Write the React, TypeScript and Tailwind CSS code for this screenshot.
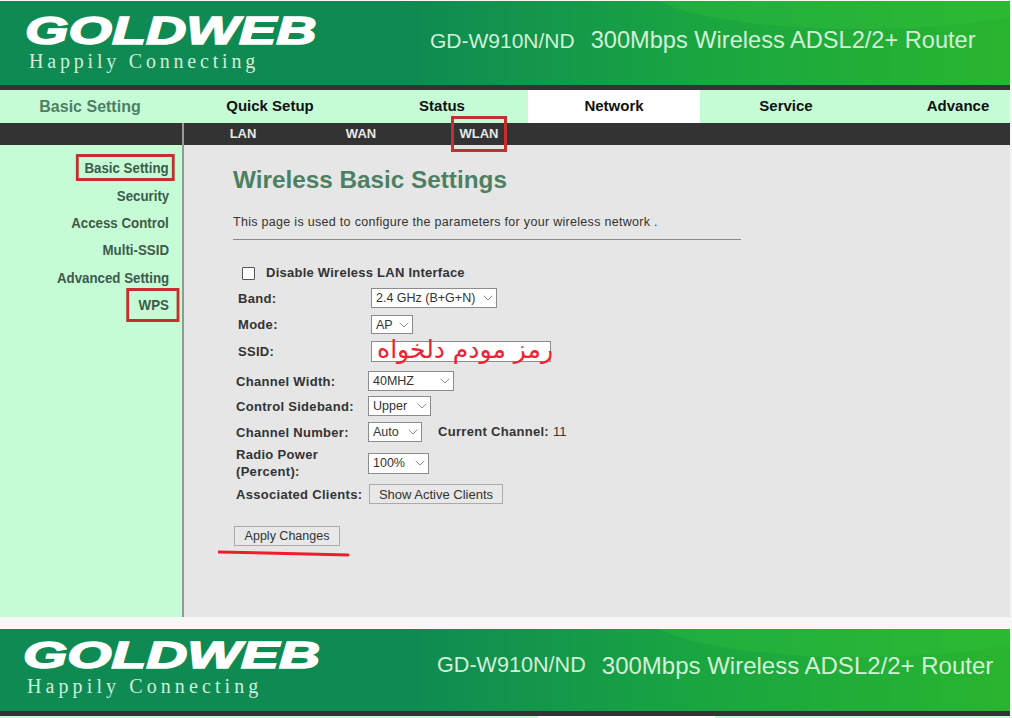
import React from 'react';
import { ChevronDown } from 'lucide-react';

const NAV_ITEMS = ['Quick Setup', 'Status', 'Network', 'Service', 'Advance'];
const SUB_ITEMS = ['LAN', 'WAN', 'WLAN'];
const SIDE_ITEMS = ['Basic Setting', 'Security', 'Access Control', 'Multi-SSID', 'Advanced Setting', 'WPS'];

const Banner: React.FC<{ second?: boolean }> = ({ second }) => (
  <div className={`relative flex overflow-hidden bg-gradient-to-r from-[#0f8a52] from-40% via-[#1aa63f] via-70% to-[#29b52e] ${second ? 'h-[82px]' : 'h-[84px] mt-px'}`}>
    <div className="absolute -top-[52px] -right-[60px] w-[420px] h-[80px] rounded-[50%] bg-[#35c23a] opacity-30" />
    <div className={`relative flex flex-col shrink-0 ${second ? 'w-[437px] pl-[23px] pt-[9px]' : 'w-[430px] pl-[25px] pt-[11px]'}`}>
      <div className={`font-['Liberation_Sans',sans-serif] font-bold italic text-white origin-left whitespace-nowrap ${second ? 'text-[36px] leading-[36px] scale-x-[1.58] [-webkit-text-stroke:1.5px_white]' : 'text-[38px] leading-[38px] scale-x-[1.47] [-webkit-text-stroke:1.5px_white]'}`}>
        GOLDWEB
      </div>
      <div className={`font-['Liberation_Serif',serif] text-[#cfeedd] whitespace-nowrap text-[20px] leading-[24px] ${second ? 'ml-[4px] tracking-[4.1px]' : 'ml-[4px] -mt-[1px] tracking-[3.8px]'}`}>
        Happily Connecting
      </div>
    </div>
    <div className={`relative flex items-center font-['Liberation_Sans',sans-serif] text-[#d3f0d8] whitespace-nowrap ${second ? 'pb-[9px]' : 'pb-[4px]'}`}>
      <span className={second ? 'text-[21.6px]' : 'text-[21px]'}>GD-W910N/ND</span>
      <span className={second ? 'text-[24px] ml-[16px]' : 'text-[23.6px] ml-[16px]'}>300Mbps Wireless ADSL2/2+ Router</span>
    </div>
  </div>
);

const Select: React.FC<{ value: string; width: string; height?: string }> = ({ value, width, height = 'h-[20px]' }) => (
  <div className={`relative ${width} ${height}`}>
    <select
      defaultValue={value}
      className="block appearance-none w-full h-full bg-white border border-[#8c8c8c] pl-[4px] text-[12.5px] text-[#333] font-['Liberation_Sans',sans-serif] outline-none"
    >
      <option>{value}</option>
    </select>
    <ChevronDown className="absolute right-[1px] top-1/2 -translate-y-1/2 w-[16px] h-[16px] text-[#555] pointer-events-none" strokeWidth={1} />
  </div>
);

const Row: React.FC<{ label: React.ReactNode; wide?: boolean; className: string; children: React.ReactNode }> = ({ label, wide, className, children }) => (
  <div className={`flex items-center ${className}`}>
    <div className={`text-[13px] leading-[17px] tracking-[0.3px] font-bold text-[#333] whitespace-nowrap ${wide ? 'w-[138px] pl-[5px]' : 'w-[135px] pl-[3px]'}`}>{label}</div>
    {children}
  </div>
);

export default function App() {
  return (
    <div className="w-full h-[718px] overflow-hidden bg-[#f7f7f7] pr-[2px] font-['Liberation_Sans',sans-serif]">
      <Banner />
      <div className="h-[5px] bg-[#333]" />

      {/* top nav */}
      <div className="flex h-[33px] overflow-hidden bg-[#c5fcd6]">
        <div className="w-[184px] shrink-0 pr-[4px] flex items-center justify-center text-[16px] font-bold text-[#4f7f63]">Basic Setting</div>
        {NAV_ITEMS.map((item) => (
          <div
            key={item}
            className={`w-[172px] shrink-0 flex items-center justify-center text-[15px] font-bold text-[#111] ${item === 'Network' ? 'bg-white' : ''}`}
          >
            {item}
          </div>
        ))}
      </div>
      <div className="relative z-10 flex h-[22px] bg-[#333]">
        <div className="w-[184px] shrink-0 border-r-2 border-[#999]" />
        {SUB_ITEMS.map((item) => (
          <div key={item} className="relative w-[118px] flex items-center justify-center text-[13px] font-bold text-[#e8e8e8]">
            {item}
            {item === 'WLAN' && <span className="absolute left-[31px] -top-[7px] w-[56px] h-[36px] border-[3px] border-[#c62f2f]" />}
          </div>
        ))}
      </div>

      <div className="flex h-[472px]">
        {/* sidebar */}
        <div className="w-[184px] shrink-0 bg-[#c5fcd6] border-r-2 border-[#8f9c94] flex flex-col items-end pt-[10px] pr-[13px]">
          {SIDE_ITEMS.map((item) => (
            <div key={item} className="relative h-[27.4px] flex items-center text-[14px] font-bold text-[#3f5a4a] whitespace-nowrap scale-x-[0.95] origin-right">
              {item}
              {item === 'Basic Setting' && <span className="absolute -left-[9px] -right-[6px] -top-[1px] h-[27px] border-[3px] border-[#c62f2f]" />}
              {item === 'WPS' && <span className="absolute -left-[13px] -right-[11px] -top-[4px] h-[34px] border-[3px] border-[#c62f2f]" />}
            </div>
          ))}
        </div>

        {/* form */}
        <div className="relative flex-1 bg-[#e6e6e6] pl-[49px] pt-[20px] text-[#333]">
          <h1 className="text-[24.3px] leading-[30px] font-bold text-[#4d7f63]">Wireless Basic Settings</h1>
          <p className="mt-[20px] text-[12.5px] leading-[14px] tracking-[0.3px] whitespace-nowrap">This page is used to configure the parameters for your wireless network .</p>
          <div className="mt-[10px] w-[508px] border-t border-[#8a8a8a]" />

          <div className="flex items-center h-[20px] mt-[23px] pl-[9px]">
            <input type="checkbox" className="appearance-none w-[13px] h-[13px] bg-white border border-[#555] rounded-[1px]" />
            <span className="ml-[11px] text-[13px] font-bold tracking-[0.25px]">Disable Wireless LAN Interface</span>
          </div>

          <Row wide className="h-[20px] mt-[5px]" label="Band:"><Select value="2.4 GHz (B+G+N)" width="w-[126px]" /></Row>
          <Row wide className="h-[19px] mt-[7px]" label="Mode:"><Select value="AP" width="w-[42px]" height="h-[19px]" /></Row>
          <Row wide className="h-[21px] mt-[7px]" label="SSID:">
            <div className="relative w-[180px] h-[21px] bg-white border border-[#8c8c8c]">
              <span dir="rtl" className="absolute -right-[3px] -top-[8px] font-['DejaVu_Sans',sans-serif] text-[25px] leading-[32px] text-[#ee2233] whitespace-nowrap">رمز مودم دلخواه</span>
            </div>
          </Row>
          <Row className="h-[20px] mt-[9px]" label="Channel Width:"><Select value="40MHZ" width="w-[86px]" /></Row>
          <Row className="h-[20px] mt-[5px]" label="Control Sideband:"><Select value="Upper" width="w-[63px]" /></Row>
          <Row className="h-[20px] mt-[6px]" label="Channel Number:">
            <Select value="Auto" width="w-[54px]" />
            <span className="ml-[16px] text-[13px] font-bold tracking-[0.3px]">Current Channel:</span>
            <span className="ml-[4px] text-[13px]">11</span>
          </Row>
          <Row className="h-[34px] mt-[4px]" label={<>Radio Power<br />(Percent):</>}><Select value="100%" width="w-[61px]" height="h-[21px]" /></Row>
          <Row className="h-[20px] mt-[4px]" label="Associated Clients:">
            <button className="ml-px w-[134px] h-[20px] bg-[#e8e8e8] border border-[#aaa] text-[13px]">Show Active Clients</button>
          </Row>

          <button className="block mt-[22px] w-[106px] h-[20px] ml-px bg-[#e8e8e8] border border-[#aaa] text-[12.5px]">Apply Changes</button>
          <svg className="absolute left-[34px] top-[404px]" width="132" height="8" viewBox="0 0 132 8">
            <path d="M1 3 C 40 3.5, 90 5, 130 6" stroke="#ee1c2e" strokeWidth="3" fill="none" strokeLinecap="round" />
          </svg>
        </div>
      </div>

      <div className="h-[12px]" />
      <Banner second />
      <div className="h-[5px] bg-[#333]" />
      <div className="flex h-[2px] bg-[#c5fcd6]">
        <div className="ml-[538px] w-[177px] bg-white" />
      </div>
    </div>
  );
}
